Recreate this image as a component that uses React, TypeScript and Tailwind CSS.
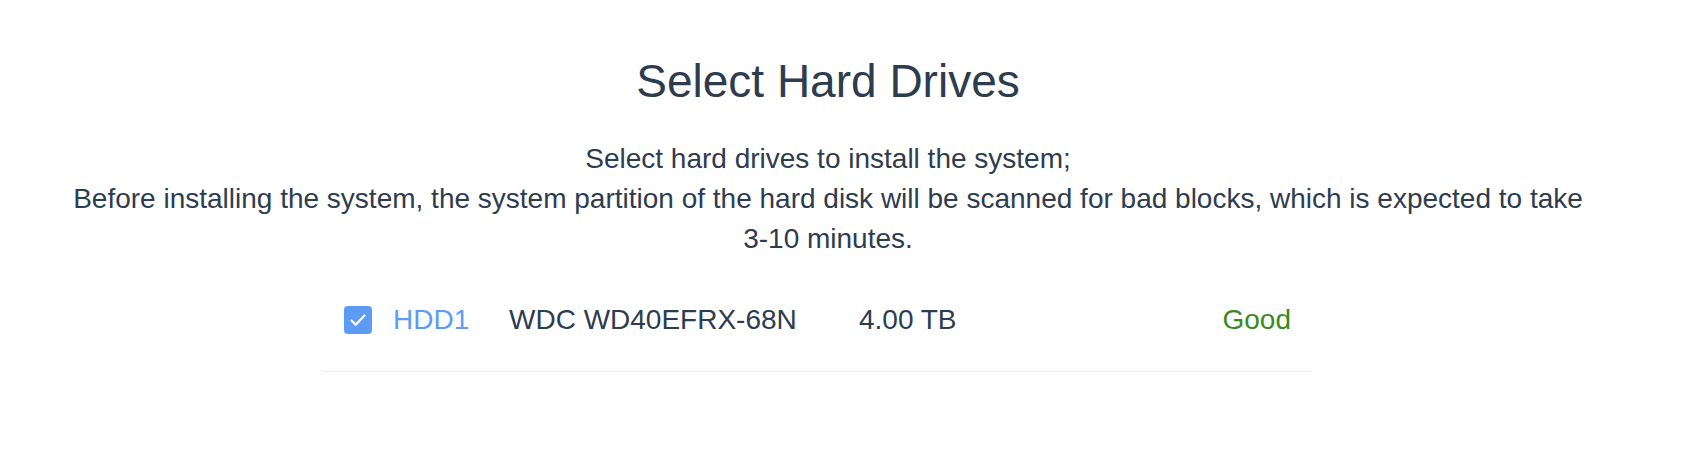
import { useState } from 'react';

interface IDrive {
  slot: string;
  model: string;
  size: string;
  status: string;
}

const DRIVES: IDrive[] = [
  { slot: 'HDD1', model: 'WDC WD40EFRX-68N', size: '4.00 TB', status: 'Good' },
];

const CheckIcon = () => (
  <svg width="28" height="28" viewBox="0 0 28 28" fill="none">
    <path d="M7.5 14.5l4.2 4.2 8.8-9.2" stroke="white" strokeWidth="2.2" strokeLinecap="round" strokeLinejoin="round" />
  </svg>
);

export default function App() {
  const [checked, setChecked] = useState<Record<string, boolean>>({ HDD1: true });

  return (
    <div className="w-full h-[472px] bg-white text-[#2e3c4f] font-['Liberation_Sans',Helvetica,Arial,sans-serif]">
      <div className="w-[1656px] flex flex-col items-center pt-[55px]">
        <h1 className="text-[46px] leading-[52px] font-normal">Select Hard Drives</h1>

        <p className="mt-[32px] w-[1540px] text-center text-[28px] leading-[40px]">
          Select hard drives to install the system;
          <br />
          Before installing the system, the system partition of the hard disk will be scanned for bad blocks, which is
          expected to take 3-10 minutes.
        </p>

        <div className="mt-[41px] w-[988px] mr-[20px]">
          {DRIVES.map((d) => (
            <div key={d.slot} className="flex items-center pl-[20px] pr-[21px] pb-[31px] border-b border-[#ebebeb] text-[28px] leading-[40px]">
              <button
                className={`w-[28px] h-[28px] rounded-[4px] flex items-center justify-center shrink-0 ${
                  checked[d.slot] ? 'bg-[#5c9cf7]' : 'bg-white border border-gray-300'
                }`}
                onClick={() => setChecked({ ...checked, [d.slot]: !checked[d.slot] })}
              >
                {checked[d.slot] && <CheckIcon />}
              </button>
              <span className="ml-[21px] w-[116px] text-[#5c9cf7]">{d.slot}</span>
              <span className="w-[350px]">{d.model}</span>
              <span className="flex-1">{d.size}</span>
              <span className="text-[#3a8a1f]">{d.status}</span>
            </div>
          ))}
        </div>
      </div>
    </div>
  );
}
